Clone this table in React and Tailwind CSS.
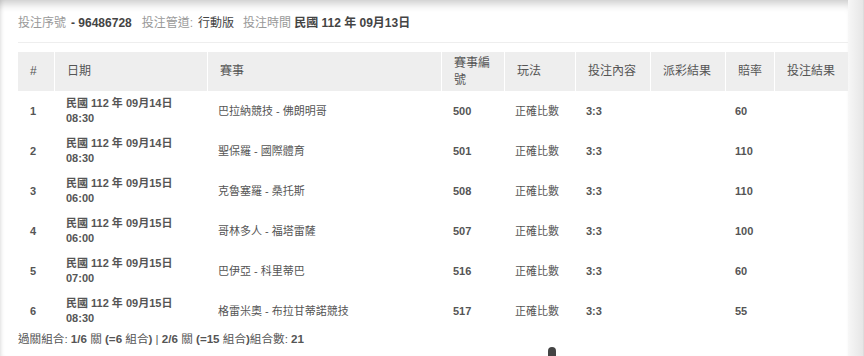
const rows = [
  { no: 1, date: "民國 112 年 09月14日", time: "08:30", match: "巴拉納競技 - 佛朗明哥", code: "500", play: "正確比數", pick: "3:3", odds: "60" },
  { no: 2, date: "民國 112 年 09月14日", time: "08:30", match: "聖保羅 - 國際體育", code: "501", play: "正確比數", pick: "3:3", odds: "110" },
  { no: 3, date: "民國 112 年 09月15日", time: "06:00", match: "克魯塞羅 - 桑托斯", code: "508", play: "正確比數", pick: "3:3", odds: "110" },
  { no: 4, date: "民國 112 年 09月15日", time: "06:00", match: "哥林多人 - 福塔雷薩", code: "507", play: "正確比數", pick: "3:3", odds: "100" },
  { no: 5, date: "民國 112 年 09月15日", time: "07:00", match: "巴伊亞 - 科里蒂巴", code: "516", play: "正確比數", pick: "3:3", odds: "60" },
  { no: 6, date: "民國 112 年 09月15日", time: "08:30", match: "格雷米奧 - 布拉甘蒂諾競技", code: "517", play: "正確比數", pick: "3:3", odds: "55" },
];

const cols = "grid grid-cols-[36px_153px_234px_63px_71px_75px_75px_49px_74px]";

const heads = ["#", "日期", "賽事", "賽事編號", "玩法", "投注內容", "派彩結果", "賠率", "投注結果"];

export default function App() {
  return (
    <div
      className="relative flex h-[356px] w-[864px] overflow-hidden bg-white text-[#555]"
      style={{ fontFamily: '"Liberation Sans", Arial, "Noto Sans CJK TC", sans-serif' }}
    >
      <div className="flex-1 shadow-[inset_0_10px_9px_-6px_rgba(0,0,0,0.2),inset_4px_0_4px_-3px_rgba(0,0,0,0.12)]">
        <div className="pl-[18px] w-[848px]">
          {/* order info */}
          <div className="flex items-center h-[43px] pt-[4px] border-b border-[#eee] text-[12px]">
            <span className="text-[#999]">投注序號</span>
            <span className="ml-[5px] font-bold text-[#444]">- 96486728</span>
            <span className="ml-[10px] text-[#999]">投注管道:</span>
            <span className="ml-[5px] text-[#444]">行動版</span>
            <span className="ml-[9px] text-[#999]">投注時間</span>
            <span className="ml-[3px] font-bold text-[#444]">民國 112 年 09月13日</span>
          </div>

          {/* table */}
          <div className="mt-[9px]">
            <div className={`${cols} h-[39px] bg-[#eee] text-[12px] leading-[17px] text-[#555]`}>
              {heads.map((h, i) => (
                <div
                  key={h}
                  className={`flex items-center pl-[12px] pr-[12px] ${i > 0 ? "border-l border-white" : ""}`}
                >
                  {h}
                </div>
              ))}
            </div>

            {rows.map((r) => (
              <div key={r.no} className={`${cols} h-[40px] text-[11px] items-center`}>
                <div className="pl-[12px] font-bold">{r.no}</div>
                <div className="pl-[12px] font-bold leading-[15px] text-[#555]">
                  <div>{r.date}</div>
                  <div>{r.time}</div>
                </div>
                <div className="pl-[11px]">{r.match}</div>
                <div className="pl-[12px] font-bold">{r.code}</div>
                <div className="pl-[11px]">{r.play}</div>
                <div className="pl-[11px] font-bold">{r.pick}</div>
                <div />
                <div className="pl-[10px] font-bold">{r.odds}</div>
                <div />
              </div>
            ))}
          </div>

          <div className="mt-[1px] text-[11.6px] leading-[14px] text-[#555]">
            過關組合: <b>1/6</b> 關 <b>(=6</b> 組合<b>)</b> | <b>2/6</b> 關 <b>(=15</b> 組合<b>)</b>組合數: <b>21</b>
          </div>
        </div>
      </div>

      <div className="w-[16px] bg-gradient-to-r from-[#f7f7f7] to-[#e6e6e6] border-r border-[#ddd]" />

      <div className="absolute left-[548px] top-[347px] h-[12px] w-[8px] rounded-t-full bg-[#444]" />
    </div>
  );
}
